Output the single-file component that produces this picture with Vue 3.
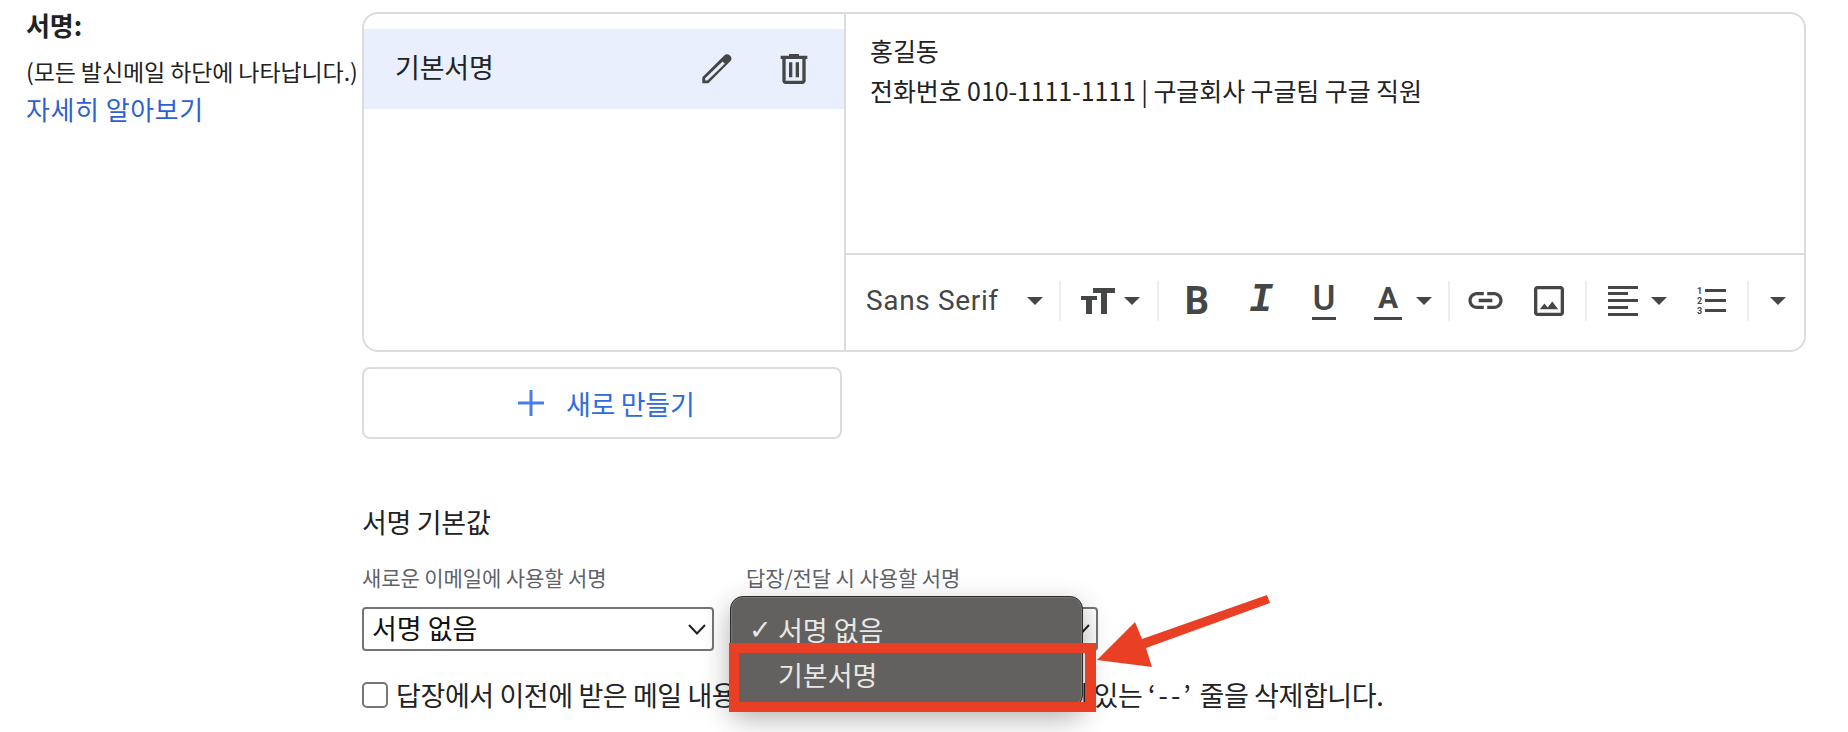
<script setup>
const pencilOuter = 'M5.3 34.3V28.3L27.500 6.300c1.500-1.500 3.500-1.500 5.500.3 1.800 1.800 2 4 .5 5.500L11.300 34.300zM8.200 31.400h2.200L27.800 14.800 25.600 12.600 8.200 29.200z'
const trash = 'M15 4V3H9v1H4v2h1v13c0 1.1.9 2 2 2h10c1.1 0 2-.9 2-2V6h1V4h-5zm2 15H7V6h10v13zM9 8h2v9H9zm4 0h2v9h-2z'
const link = 'M3.9 12c0-1.71 1.39-3.1 3.1-3.1h4V7H7c-2.76 0-5 2.24-5 5s2.24 5 5 5h4v-1.9H7c-1.71 0-3.1-1.39-3.1-3.1zM8 13h8v-2H8v2zm9-6h-4v1.9h4c1.71 0 3.1 1.39 3.1 3.1s-1.39 3.1-3.1 3.1h-4V17h4c2.76 0 5-2.24 5-5s-2.24-5-5-5z'
const image = 'M19 3H5c-1.1 0-2 .9-2 2v14c0 1.1.9 2 2 2h14c1.1 0 2-.9 2-2V5c0-1.1-.9-2-2-2zm0 16H5V5h14v14zm-5.04-6.71l-2.75 3.54-1.96-2.36L6.5 17h11l-3.54-4.71z'
</script>

<template>
  <div class="page">
    <aside class="intro">
      <div class="title">서명:</div>
      <div class="hint">(모든 발신메일 하단에 나타납니다.)</div>
      <a class="more">자세히 알아보기</a>
    </aside>

    <main class="content">
      <section class="card">
        <div class="list">
          <div class="item">
            <span class="item-name">기본서명</span>
            <svg class="ico pencil" viewBox="0 0 40 40"><path fill-rule="evenodd" :d="pencilOuter" /></svg>
            <svg class="ico bin" viewBox="0 0 24 24"><path :d="trash" /></svg>
          </div>
        </div>
        <div class="editor">
          <div class="body">
            <div>홍길동</div>
            <div class="body-2">전화번호 010-1111-1111 | 구글회사 구글팀 구글 직원</div>
          </div>
          <div class="toolbar">
            <span class="font-name">Sans Serif</span>
            <i class="caret c-font"></i>
            <b class="sep s1"></b>

            <span class="tt"><i class="tt-s"></i><i class="tt-l"></i></span>
            <i class="caret c-tt"></i>
            <b class="sep s2"></b>

            <span class="glyph g-b">B</span>
            <span class="glyph g-i">I</span>
            <span class="glyph g-u">U</span>
            <span class="glyph g-a">A</span>
            <i class="caret c-a"></i>
            <b class="sep s3"></b>

            <svg class="ico i-link" viewBox="0 0 24 24"><path :d="link" /></svg>
            <svg class="ico i-img" viewBox="0 0 24 24"><path :d="image" /></svg>
            <b class="sep s4"></b>

            <span class="align"><i class="w"></i><i class="n"></i><i class="w"></i><i class="n"></i><i class="w"></i></span>
            <i class="caret c-al"></i>
            <span class="numbered">
              <span class="num-row"><small>1</small><i></i></span>
              <span class="num-row"><small>2</small><i></i></span>
              <span class="num-row"><small>3</small><i></i></span>
            </span>
            <b class="sep s5"></b>
            <i class="caret c-more"></i>
          </div>
        </div>
      </section>

      <button class="create">
        <svg class="plus" viewBox="0 0 28 28"><path d="M12.5 1h3v11.5H27v3H15.500V27h-3V15.500H1v-3h11.500z" /></svg>
        <span>새로 만들기</span>
      </button>

      <h3 class="defaults">서명 기본값</h3>

      <div class="fields">
        <div class="field">
          <label class="f-label">새로운 이메일에 사용할 서명</label>
          <div class="select">
            <span class="sel-value">서명 없음</span>
            <svg class="chev" viewBox="0 0 18 11"><path d="M1 1l8 8.500L17 1" /></svg>
          </div>
        </div>
        <div class="field">
          <label class="f-label">답장/전달 시 사용할 서명</label>
          <div class="select">
            <svg class="chev chev-end" viewBox="0 0 18 11"><path d="M1 1l8 8.500L17 1" /></svg>
            <div class="menu">
              <div class="opt"><span class="check">✓</span>서명 없음</div>
              <div class="opt opt-2">기본서명</div>
            </div>
            <div class="mark"></div>
          </div>
        </div>
      </div>

      <label class="remove">
        <input type="checkbox" class="box" />
        <span>답장에서 이전에 받은 메일 내용 앞에 이 서명을 삽입하고 그 앞에 있는 <span class="dashes">‘--’</span> 줄을 삭제합니다.</span>
      </label>
    </main>

    <svg class="arrow" viewBox="0 0 1848 732">
      <polygon points="1267,595 1270,603 1146,648 1152,667 1097,660 1135,622 1142,639" />
    </svg>
  </div>
</template>

<style>
html, body { margin: 0; background: #fff; }
</style>

<style scoped>
.page {
  width: 1848px;
  height: 732px;
  position: relative;
  overflow: hidden;
  display: grid;
  grid-template-columns: 362px 1fr;
  background: #fff;
  color: #222;
  font-family: "Noto Sans CJK KR", "Liberation Sans", sans-serif;
}
.intro { padding: 8px 0 0 26px; font-size: 23px; white-space: nowrap; }
.title { font-size: 26px; font-weight: 700; line-height: 34px; letter-spacing: -0.1px; }
.hint { margin-top: 12px; line-height: 34px; letter-spacing: -0.1px; }
.more { display: block; margin-top: 4px; font-size: 26px; line-height: 34px; color: #2f5fd0; letter-spacing: 0.55px; }

.content { padding-top: 12px; }
.card {
  box-sizing: border-box;
  width: 1444px;
  height: 340px;
  border: 2px solid #dadce0;
  border-radius: 16px;
  display: flex;
  overflow: hidden;
}
.list { width: 482px; border-right: 2px solid #dadce0; padding-top: 15px; flex: none; box-sizing: border-box; }
.item { height: 80px; background: #e9effc; display: flex; align-items: center; }
.item-name { margin-left: 31px; width: 300px; font-size: 27px; letter-spacing: -0.2px; position: relative; top: -3px; }
.ico { fill: #444746; width: 40px; height: 40px; flex: none; display: block; }
.pencil { margin-left: 2px; position: relative; top: 0; }
.bin { position: relative; top: 0; margin-left: 37px; }

.editor { flex: 1; display: flex; flex-direction: column; min-width: 0; }
.body { height: 241px; box-sizing: border-box; border-bottom: 2px solid #dadce0; padding: 16px 0 0 24px; font-size: 25px; line-height: 40px; letter-spacing: -0.1px; }

.toolbar { flex: 1; display: flex; align-items: center; padding-left: 20px; color: #444746; position: relative; top: -2px; }
.font-name { width: 131px; font-family: Roboto, sans-serif; font-size: 28px; letter-spacing: 0.65px; white-space: nowrap; }
.caret { display: block; flex: none; width: 0; height: 0; border-left: 8px solid transparent; border-right: 8px solid transparent; border-top: 8px solid #444746; }
.sep { display: block; flex: none; width: 2px; height: 40px; background: #eeeeee; }
.c-font { margin-left: 30px; }
.s1 { margin-left: 16px; }
.tt { display: block; flex: none; width: 34px; height: 26px; margin-left: 20px; position: relative; }
.tt i { position: absolute; display: block; background: linear-gradient(#444746,#444746) center/6px 100% no-repeat; }
.tt-s { left: 0; bottom: 0; width: 16px; height: 18px; }
.tt-s::before, .tt-l::before { content: ""; position: absolute; left: 0; right: 0; top: 0; background: #444746; }
.tt-s::before { height: 4px; }
.tt-l { right: 0; top: 0; width: 22px; height: 26px; }
.tt-l::before { height: 5px; }
.c-tt { margin-left: 9px; }
.s2 { margin-left: 17px; }

.glyph { display: block; flex: none; width: 40px; text-align: center; height: 40px; position: relative; }
.g-b { margin-left: 18px; font: 700 38px/40px Roboto, sans-serif; }
.g-i { margin-left: 24px; font: italic 700 40px/40px "Liberation Mono", monospace; }
.g-u { margin-left: 23px; font: 500 35px/36px Roboto, sans-serif; }
.g-u::after, .g-a::after { content: ""; position: absolute; height: 3px; background: #444746; bottom: 1px; }
.g-u::after { left: 8px; right: 8px; }
.g-a { margin-left: 24px; font: 700 30px/34px Roboto, sans-serif; }
.g-a::after { left: 6px; right: 6px; }
.c-a { margin-left: 8px; }
.s3 { margin-left: 16px; }
.i-link { margin-left: 15px; width: 41px; height: 41px; }
.i-img { margin-left: 23px; }
.s4 { margin-left: 16px; }
.align { display: flex; flex: none; flex-direction: column; justify-content: space-between; width: 30px; height: 30px; margin-left: 21px; }
.align i { display: block; height: 3px; background: #444746; }
.align .w { width: 30px; }
.align .n { width: 20px; }
.c-al { margin-left: 13px; }
.numbered { display: flex; flex: none; flex-direction: column; width: 30px; height: 30px; margin-left: 29px; justify-content: space-between; }
.num-row { display: flex; align-items: center; justify-content: space-between; height: 10px; }
.num-row small { font: 700 9px/10px Roboto, sans-serif; width: 7px; text-align: center; }
.num-row i { display: block; width: 21px; height: 3px; background: #444746; }
.s5 { margin-left: 21px; }
.c-more { margin-left: 21px; }

.create {
  box-sizing: border-box;
  display: flex;
  align-items: center;
  width: 480px;
  height: 72px;
  margin-top: 15px;
  padding: 0 0 0 153px;
  background: #fff;
  border: 2px solid #dadce0;
  border-radius: 8px;
  color: #2f6be0;
  font: 400 27px "Noto Sans CJK KR", sans-serif;
  letter-spacing: -0.3px;
}
.plus { width: 28px; height: 28px; fill: #4a7ee6; margin-right: 21px; flex: none; }

.defaults { margin: 66px 0 0; font-size: 27px; line-height: 34px; font-weight: 400; letter-spacing: -0.3px; color: #222; }

.fields { display: flex; gap: 32px; margin-top: 24px; }
.field { width: 352px; }
.f-label { display: block; font-size: 21px; line-height: 28px; color: #5f6368; letter-spacing: -0.1px; white-space: nowrap; }
.select {
  box-sizing: border-box;
  position: relative;
  display: flex;
  align-items: center;
  justify-content: space-between;
  height: 44px;
  margin-top: 16px;
  padding: 0 6px 0 8px;
  border: 2px solid #757575;
  border-radius: 4px;
  font-size: 27px;
  color: #111;
}
.sel-value { line-height: 36px; margin-top: -3px; }
.chev { width: 18px; height: 11px; fill: none; stroke: #222; stroke-width: 2; }
.chev-end { margin-left: auto; }

.menu {
  position: absolute;
  left: -18px;
  top: -13px;
  box-sizing: border-box;
  width: 353px;
  height: 112px;
  padding-top: 12px;
  background: #626160;
  border: 1px solid #2b2b2b;
  border-radius: 13px;
  box-shadow: inset 0 0 0 1px #7b7a79, 0 10px 28px rgba(0,0,0,.32);
  color: #e8e8e6;
  font-size: 27px;
}
.opt { height: 42px; line-height: 42px; padding-left: 47px; position: relative; }
.opt-2 { margin-top: 3px; }
.check { position: absolute; left: 18px; top: 0; font-family: "DejaVu Sans", sans-serif; font-weight: 700; font-size: 27px; }
.mark {
  position: absolute;
  left: -19px;
  top: 34px;
  box-sizing: border-box;
  width: 367px;
  height: 69px;
  border: 10px solid #e94025;
  border-right-width: 11px;
}

.remove { display: flex; align-items: center; margin-top: 29px; height: 30px; font-size: 27px; line-height: 30px; color: #222; letter-spacing: -0.4px; white-space: nowrap; }
.dashes { letter-spacing: 3px; }
.box { appearance: none; box-sizing: border-box; width: 26px; height: 26px; margin: 0 8px 0 0; border: 2px solid #757575; border-radius: 5px; background: #fff; flex: none; }

.arrow { position: absolute; inset: 0; width: 1848px; height: 732px; fill: #e94025; pointer-events: none; }
</style>
